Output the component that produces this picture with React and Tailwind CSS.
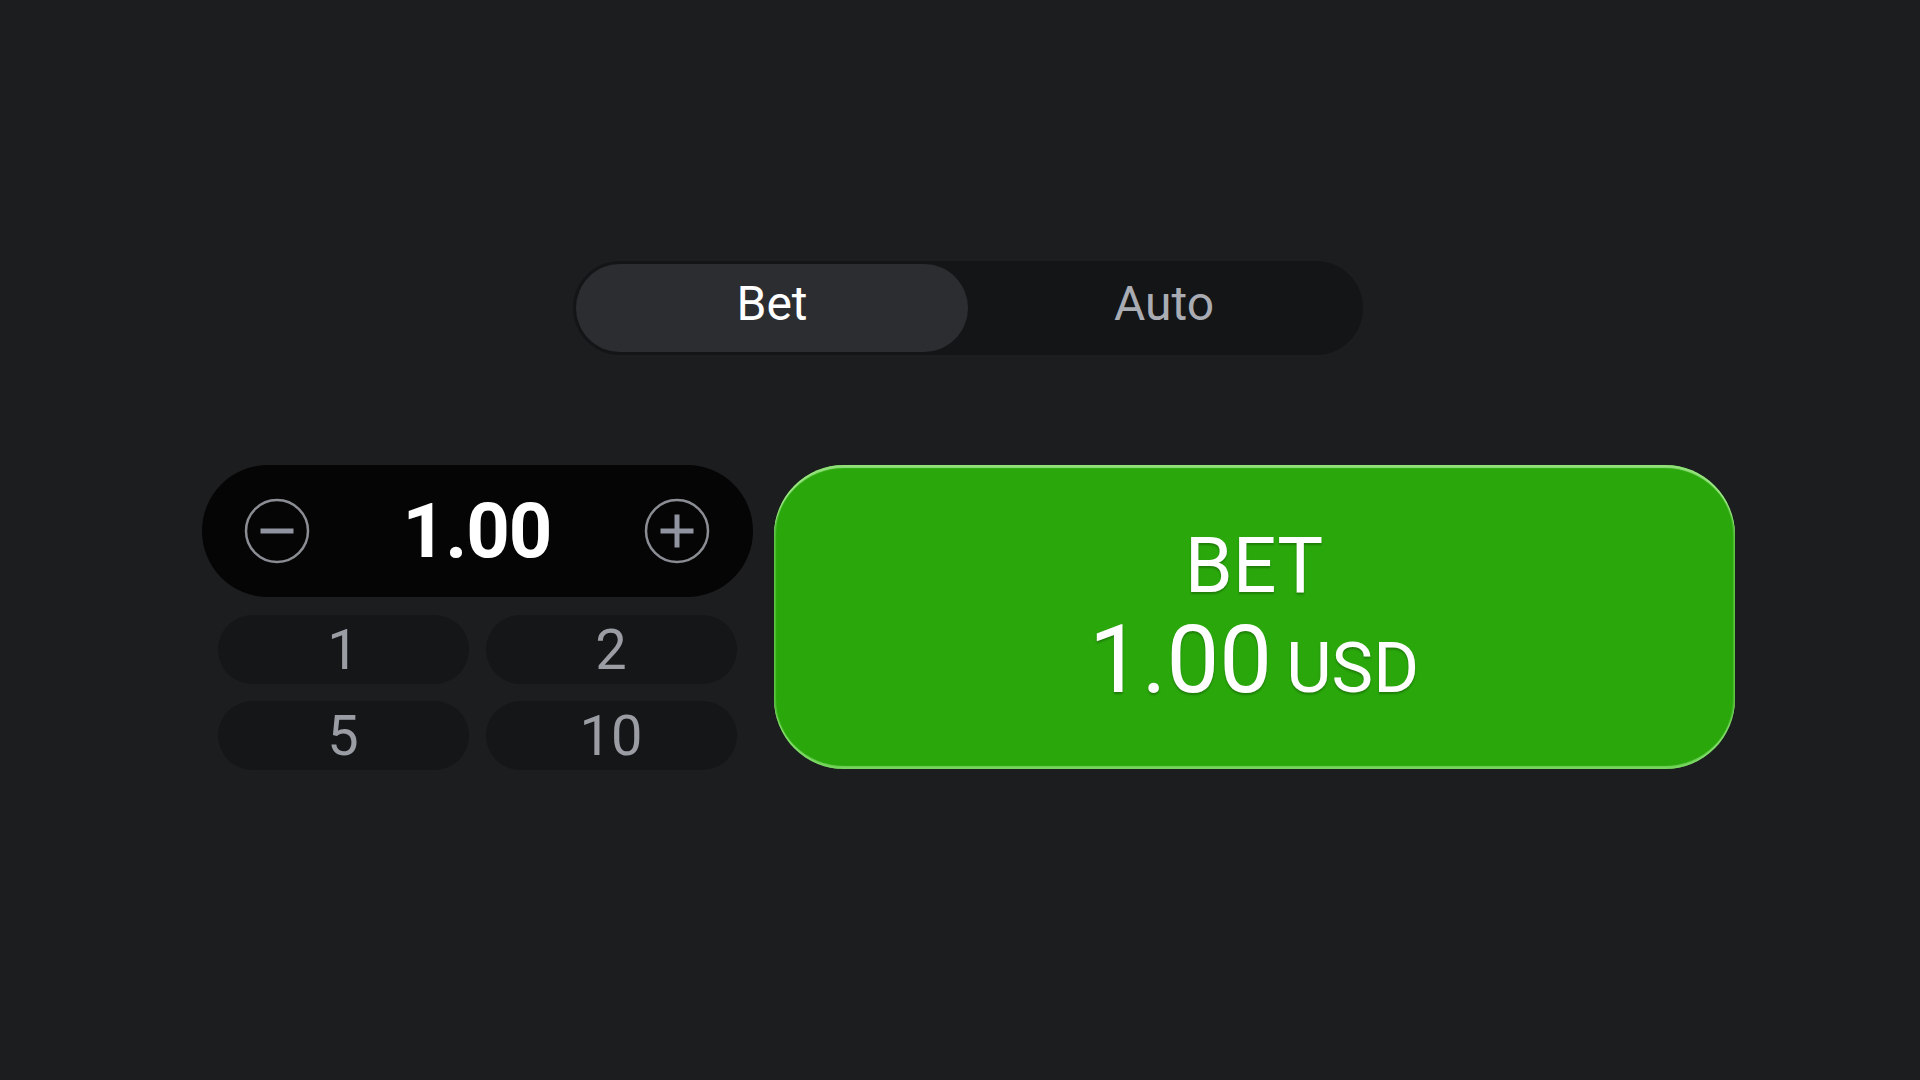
import { useState } from 'react';

const quickAmounts = ['1', '2', '5', '10'];

function CircleIcon({ plus }) {
  return (
    <svg width="66" height="66" viewBox="0 0 66 66" fill="none" aria-hidden="true">
      <circle cx="33" cy="33" r="31" stroke="#8a8d93" strokeWidth="2.5" />
      <line x1="16.5" y1="33" x2="49.5" y2="33" stroke="#9093a0" strokeWidth="5" />
      {plus && <line x1="33" y1="16.5" x2="33" y2="49.5" stroke="#9093a0" strokeWidth="5" />}
    </svg>
  );
}

export default function App() {
  const [tab, setTab] = useState('bet');
  const [amount, setAmount] = useState(1);
  const value = amount.toFixed(2);

  return (
    <div className="min-h-screen w-full bg-[#1c1d1f] font-['Roboto',sans-serif] flex flex-col items-center pt-[261px] pl-4">
      <div className="grid grid-cols-2 w-[790px] h-[94px] p-[3px] rounded-full bg-[#141517]">
        <button
          onClick={() => setTab('bet')}
          className={`rounded-full text-[48px] leading-none pb-2 ${tab === 'bet' ? 'bg-[#2c2d30] text-white' : 'text-[#a9adb3]'}`}
        >
          Bet
        </button>
        <button
          onClick={() => setTab('auto')}
          className={`rounded-full text-[48px] leading-none pb-2 ${tab === 'auto' ? 'bg-[#2c2d30] text-white' : 'text-[#a9adb3]'}`}
        >
          Auto
        </button>
      </div>

      <div className="flex gap-[21px] mt-[110px]">
        <div className="w-[551px]">
          <div className="h-[132px] rounded-full bg-[#050505] flex items-center justify-between px-[42px]">
            <button onClick={() => setAmount(Math.max(1, amount - 1))}>
              <CircleIcon />
            </button>
            <span className="text-white text-[76px] font-bold leading-none tracking-[-1px]">{value}</span>
            <button onClick={() => setAmount(amount + 1)}>
              <CircleIcon plus />
            </button>
          </div>
          <div className="grid grid-cols-2 gap-[17px] px-4 mt-[18px]">
            {quickAmounts.map((q) => (
              <button
                key={q}
                onClick={() => setAmount(Number(q))}
                className="h-[69px] rounded-full bg-[#151618] text-[#9a9da3] text-[56px] leading-none"
              >
                {q}
              </button>
            ))}
          </div>
        </div>

        <button className="w-[961px] h-[304px] rounded-[70px] bg-[#29a70b] text-white flex flex-col items-center justify-center shadow-[inset_0_3px_1px_rgba(200,255,180,0.65),inset_0_-3px_1px_rgba(190,255,170,0.5),inset_2px_0_1px_rgba(190,255,170,0.25),inset_-2px_0_1px_rgba(190,255,170,0.25)] [text-shadow:0_2px_2px_rgba(0,0,0,0.25)]">
          <span className="text-[77px] leading-none">BET</span>
          <span className="flex items-baseline mt-2">
            <span className="text-[94px] leading-none">{value}</span>
            <span className="text-[70px] leading-none ml-[14px]">USD</span>
          </span>
        </button>
      </div>
    </div>
  );
}
